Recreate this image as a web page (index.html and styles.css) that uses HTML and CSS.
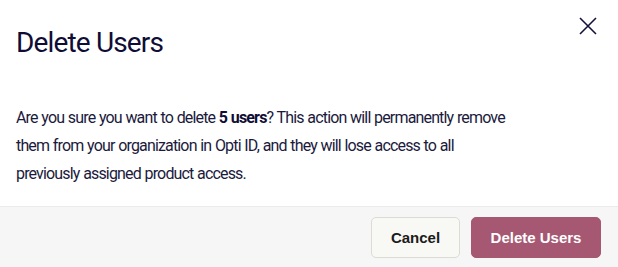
FILE: index.html
```html
<!DOCTYPE html>
<html lang="en">
<head>
<meta charset="utf-8">
<title>Delete Users</title>
<link rel="stylesheet" href="styles.css">
</head>
<body>
<div class="dialog">
  <div class="header">
    <h1 class="title">Delete Users</h1>
    <button class="close" aria-label="Close">
      <svg width="20" height="20" viewBox="0 0 20 20"><path d="M2 2 L18 18 M18 2 L2 18" stroke="#14123d" stroke-width="1.6" fill="none"/></svg>
    </button>
  </div>
  <div class="body">
    <p class="text">Are you sure you want to delete <strong>5 users</strong>? This action will permanently remove them from your organization in Opti ID, and they will lose access to all previously assigned product access.</p>
  </div>
  <div class="footer">
    <button class="btn btn-secondary">Cancel</button>
    <button class="btn btn-danger">Delete Users</button>
  </div>
</div>
</body>
</html>
```
FILE: styles.css
```css
* { box-sizing: border-box; }
html, body { margin: 0; padding: 0; background: #fff; }
body { font-family: Roboto, "Noto Sans", sans-serif; color: #1b1a3c; }
.dialog { width: 618px; height: 267px; display: flex; flex-direction: column; }
.header { display: flex; justify-content: space-between; align-items: flex-start; padding: 0 20px 0 16px; }
.title { margin: 26px 0 0; font-size: 28px; font-weight: 400; letter-spacing: -0.85px; color: #0f0d35; line-height: 34px; }
.close { margin-top: 16px; padding: 0; border: 0; background: none; width: 20px; height: 20px; cursor: pointer; }
.close svg { display: block; }
.body { padding: 44px 16px 0; flex: 1; }
.text { margin: 0; max-width: 500px; font-size: 16px; line-height: 28px; letter-spacing: -0.84px; word-spacing: 0.5px; color: #1b1a3c; }
.text strong { font-weight: 700; color: #0f0d35; }
.footer { height: 61px; border-top: 1px solid #ebebeb; background: #f6f6f6; display: flex; justify-content: flex-end; align-items: flex-start; gap: 11px; padding: 10px 17px 0; }
.btn { height: 41px; border-radius: 5px; font-family: "Liberation Sans", Arial, sans-serif; font-size: 15px; font-weight: 700; letter-spacing: 0; cursor: pointer; }
.btn-secondary { width: 89px; background: #f8f8f4; border: 1px solid #dcdcd4; color: #1b1b1b; }
.btn-danger { width: 130px; background: #a65873; border: 1px solid #a65873; color: #fff; }
```
